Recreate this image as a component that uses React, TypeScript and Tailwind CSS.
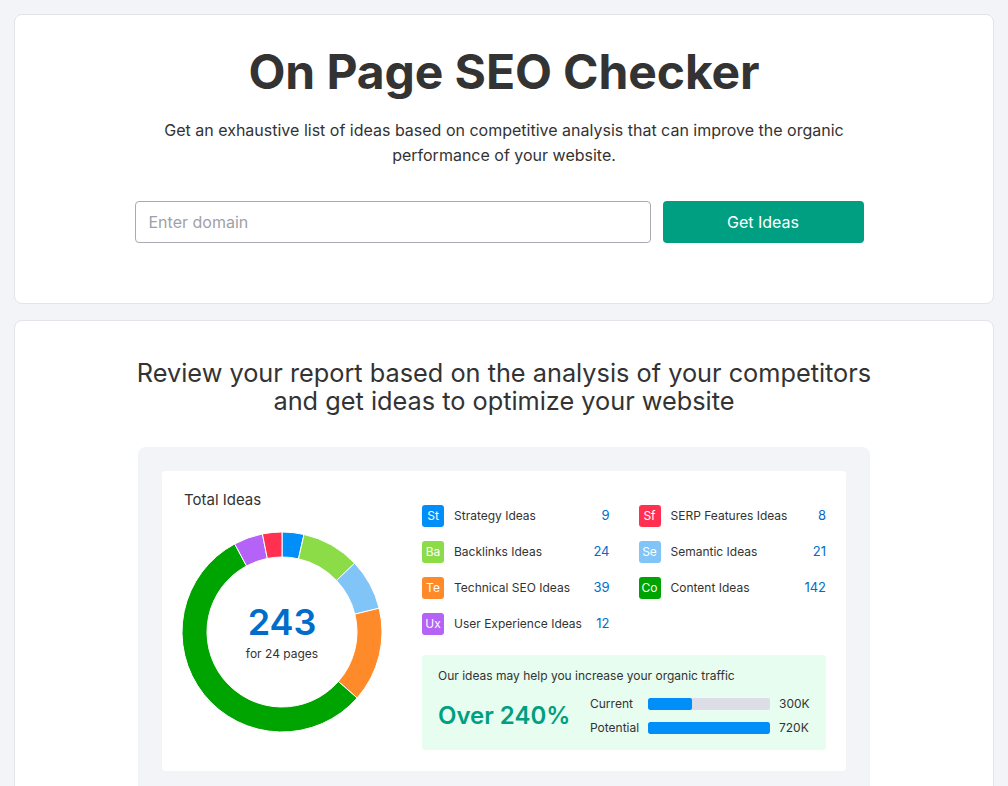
import React from "react";

const ideas = [
  { code: "St", label: "Strategy Ideas", value: 9, color: "#008ff8" },
  { code: "Sf", label: "SERP Features Ideas", value: 8, color: "#ff3050" },
  { code: "Ba", label: "Backlinks Ideas", value: 24, color: "#8bdc47" },
  { code: "Se", label: "Semantic Ideas", value: 21, color: "#80c4f8" },
  { code: "Te", label: "Technical SEO Ideas", value: 39, color: "#ff8a2a" },
  { code: "Co", label: "Content Ideas", value: 142, color: "#00a400" },
  { code: "Ux", label: "User Experience Ideas", value: 12, color: "#b463f6" },
];

// donut order, clockwise from 12 o'clock
const donutOrder = ["St", "Ba", "Se", "Te", "Co", "Ux", "Sf"];

function arcPath(cx: number, cy: number, r1: number, r2: number, a0: number, a1: number) {
  const p = (r: number, a: number) => {
    const rad = ((a - 90) * Math.PI) / 180;
    return `${cx + r * Math.cos(rad)} ${cy + r * Math.sin(rad)}`;
  };
  const large = a1 - a0 > 180 ? 1 : 0;
  return `M ${p(r2, a0)} A ${r2} ${r2} 0 ${large} 1 ${p(r2, a1)} L ${p(r1, a1)} A ${r1} ${r1} 0 ${large} 0 ${p(r1, a0)} Z`;
}

function Donut() {
  const total = ideas.reduce((s, i) => s + i.value, 0);
  let angle = 0;
  return (
    <div className="relative w-[202px] h-[202px]">
      <svg width="202" height="202" viewBox="0 0 202 202">
        {donutOrder.map((code) => {
          const item = ideas.find((i) => i.code === code)!;
          const a0 = angle;
          const a1 = angle + (item.value / total) * 360;
          angle = a1;
          return (
            <path
              key={code}
              d={arcPath(101, 101, 75, 100, a0, a1)}
              fill={item.color}
              stroke="#fff"
              strokeWidth="1"
            />
          );
        })}
      </svg>
      <div className="absolute inset-0 flex flex-col items-center justify-center">
        <div className="text-[36px] leading-[40px] font-semibold text-[#006dca]">243</div>
        <div className="text-[12px] text-[#333] mt-[3px]">for 24 pages</div>
      </div>
    </div>
  );
}

function Bar({ pct }: { pct: number }) {
  return (
    <div className="w-[122px] h-[12px] rounded-[2px] bg-[#dcdde6] overflow-hidden">
      <div className="h-full bg-[#008ff8] rounded-[2px]" style={{ width: `${pct}%` }} />
    </div>
  );
}

export default function App() {
  return (
    <div
      className="min-h-screen bg-[#f3f4f8] px-[14px] pt-[14px] flex flex-col gap-4 text-[#333]"
      style={{ fontFamily: "Inter, 'Noto Sans', sans-serif" }}
    >
      <div className="bg-white rounded-lg border border-[#e3e4ea] flex flex-col items-center pt-[27px] pb-[60px]">
        <h1 className="text-[48px] leading-[60px] font-bold text-[#333] tracking-[-0.1px]">On Page SEO Checker</h1>
        <p className="w-[700px] text-center text-[16px] leading-[25px] mt-[16px]">
          Get an exhaustive list of ideas based on competitive analysis that can improve the organic performance of your website.
        </p>
        <div className="flex gap-3 mt-[33px] pr-[10px]">
          <input
            placeholder="Enter domain"
            className="w-[516px] h-[42px] rounded-[4px] border border-[#a9aab3] px-[13px] text-[16px] placeholder:text-[#a0a1a8] outline-none"
          />
          <button className="w-[201px] h-[42px] rounded-[4px] bg-[#009f81] text-white text-[16px]">Get Ideas</button>
        </div>
      </div>

      <div className="bg-white rounded-lg border border-[#e3e4ea] flex flex-col items-center pt-[38px] pb-[40px]">
        <h2 className="w-[760px] text-center text-[25.3px] leading-[28px] text-[#333]">
          Review your report based on the analysis of your competitors and get ideas to optimize your website
        </h2>
        <div className="w-[732px] bg-[#f3f4f8] rounded-lg p-6 mt-[32px]">
          <div className="bg-white rounded-[4px] flex pl-[19px] pr-[20px] pt-[19px] pb-[21px]">
            <div className="w-[241px] flex flex-col">
              <div className="text-[15px] leading-[20px] pl-[3px] text-[#333]">Total Ideas</div>
              <div className="mt-[21px]">
                <Donut />
              </div>
            </div>
            <div className="flex-1 flex flex-col pt-[15px]">
              <div className="grid grid-cols-2 gap-x-[29px] gap-y-[14px]">
                {ideas.map((i) => (
                  <div key={i.code} className="flex items-center h-[22px]">
                    <div
                      className="w-[22px] h-[22px] rounded-[3px] text-white text-[12px] flex items-center justify-center"
                      style={{ backgroundColor: i.color }}
                    >
                      {i.code}
                    </div>
                    <span className="ml-[10px] text-[12px] text-[#333]">{i.label}</span>
                    <span className="ml-auto text-[13px] text-[#006dca]">{i.value}</span>
                  </div>
                ))}
              </div>
              <div className="mt-[20px] bg-[#e6fdf0] rounded-[4px] px-4 pt-[13px] pb-[15px]">
                <div className="text-[12px] leading-[16px] text-[#333]">Our ideas may help you increase your organic traffic</div>
                <div className="flex items-center mt-[13px]">
                  <div className="w-[152px] text-[24px] font-semibold text-[#009f81]">Over 240%</div>
                  <div className="flex flex-col gap-[10px] text-[12px] text-[#333]">
                    <div className="flex items-center h-[14px]">
                      <span className="w-[58px]">Current</span>
                      <Bar pct={36} />
                      <span className="ml-[9px]">300K</span>
                    </div>
                    <div className="flex items-center h-[14px]">
                      <span className="w-[58px]">Potential</span>
                      <Bar pct={100} />
                      <span className="ml-[9px]">720K</span>
                    </div>
                  </div>
                </div>
              </div>
            </div>
          </div>
          <div className="h-[80px]" />
        </div>
      </div>
    </div>
  );
}
